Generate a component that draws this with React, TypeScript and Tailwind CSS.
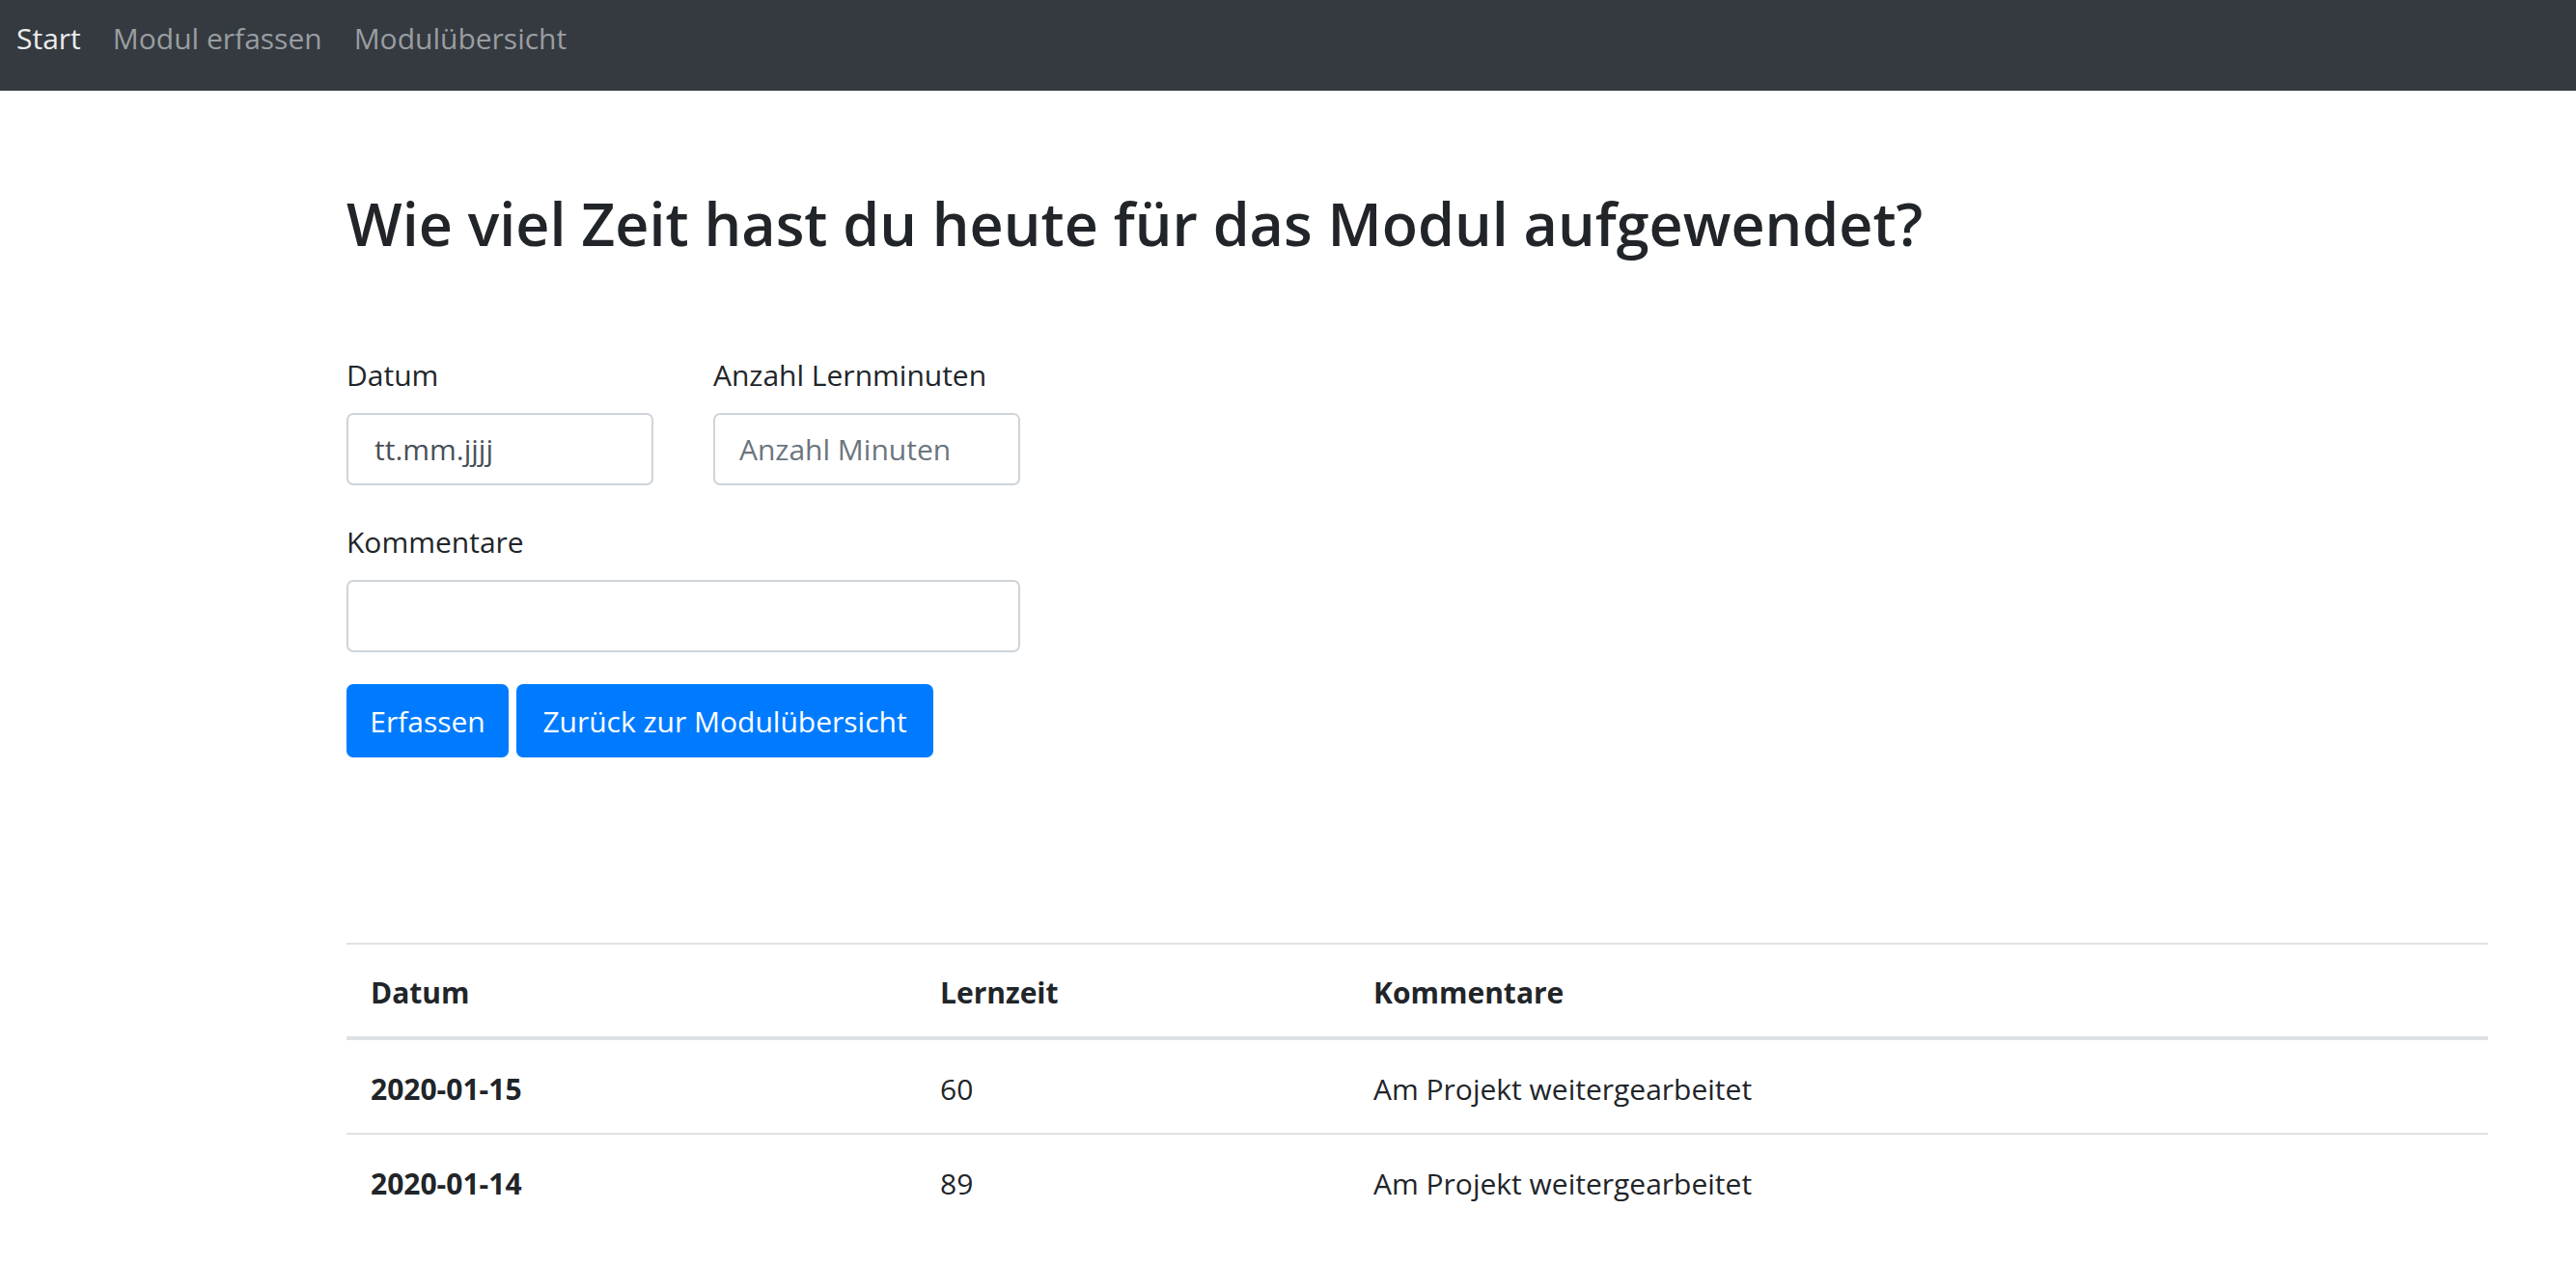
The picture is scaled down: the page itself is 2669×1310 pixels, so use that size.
const entries = [
  { datum: "2020-01-15", minuten: 60, kommentar: "Am Projekt weitergearbeitet" },
  { datum: "2020-01-14", minuten: 89, kommentar: "Am Projekt weitergearbeitet" },
];

function NavBar() {
  return (
    <nav className="h-[94px] bg-[#343a40] flex items-start gap-[33px] pl-[17px] pt-[17px] text-[30px] leading-[45px]">
      <a className="text-[#ececed]">Start</a>
      <a className="text-[#9a9da0]">Modul erfassen</a>
      <a className="text-[#9a9da0]">Modulübersicht</a>
    </nav>
  );
}

export default function App() {
  return (
    <div className="min-h-screen bg-white text-[#212529] font-['Open_Sans',sans-serif]">
      <NavBar />

      <main className="pl-[359px] w-[2578px]">
        <h1 className="mt-[101px] text-[61px] leading-[74px] font-semibold">
          Wie viel Zeit hast du heute für das Modul aufgewendet?
        </h1>

        {/* Form */}
        <form className="mt-[98px] w-[698px] text-[30px] leading-[43px]">
          <div className="flex gap-[62px]">
            <div className="flex flex-col">
              <label htmlFor="datum">Datum</label>
              <input
                id="datum"
                type="text"
                defaultValue="tt.mm.jjjj"
                className="mt-[18px] w-[318px] h-[75px] px-[27px] border-2 border-[#ced4da] rounded-[7px] text-[#495057] outline-none"
              />
            </div>
            <div className="flex flex-col">
              <label htmlFor="minuten">Anzahl Lernminuten</label>
              <input
                id="minuten"
                type="text"
                placeholder="Anzahl Minuten"
                className="mt-[18px] w-[318px] h-[75px] px-[25px] border-2 border-[#ced4da] rounded-[7px] text-[#495057] placeholder:text-[#6c757d] outline-none"
              />
            </div>
          </div>

          <div className="flex flex-col mt-[37px]">
            <label htmlFor="kommentar">Kommentare</label>
            <input
              id="kommentar"
              type="text"
              className="mt-[18px] w-[698px] h-[75px] px-[26px] border-2 border-[#ced4da] rounded-[7px] text-[#495057] outline-none"
            />
          </div>

          <div className="flex gap-[8px] mt-[33px]">
            <button type="button" className="h-[76px] w-[168px] bg-[#007bff] text-white rounded-[7px]">
              Erfassen
            </button>
            <button type="button" className="h-[76px] w-[432px] bg-[#007bff] text-white rounded-[7px]">
              Zurück zur Modulübersicht
            </button>
          </div>
        </form>

        {/* Table */}
        <div className="mt-[192px] w-[2219px] text-[30px] leading-[43px]">
          <div className="grid grid-cols-[590px_449px_1fr] border-t-2 border-b-4 border-t-[#dee2e6] border-b-[#dee2e6] font-bold">
            <div className="pl-[25px] pt-[28px] pb-[24px]">Datum</div>
            <div className="pl-[25px] pt-[28px] pb-[24px]">Lernzeit</div>
            <div className="pl-[25px] pt-[28px] pb-[24px]">Kommentare</div>
          </div>
          {entries.map((e, i) => (
            <div
              key={e.datum}
              className={
                i === 0
                  ? "grid grid-cols-[590px_449px_1fr]"
                  : "grid grid-cols-[590px_449px_1fr] border-t-2 border-[#dee2e6]"
              }
            >
              <div className="pl-[25px] pt-[29px] pb-[24px] font-bold">{e.datum}</div>
              <div className="pl-[25px] pt-[29px] pb-[24px]">{e.minuten}</div>
              <div className="pl-[25px] pt-[29px] pb-[24px]">{e.kommentar}</div>
            </div>
          ))}
        </div>
      </main>
    </div>
  );
}
